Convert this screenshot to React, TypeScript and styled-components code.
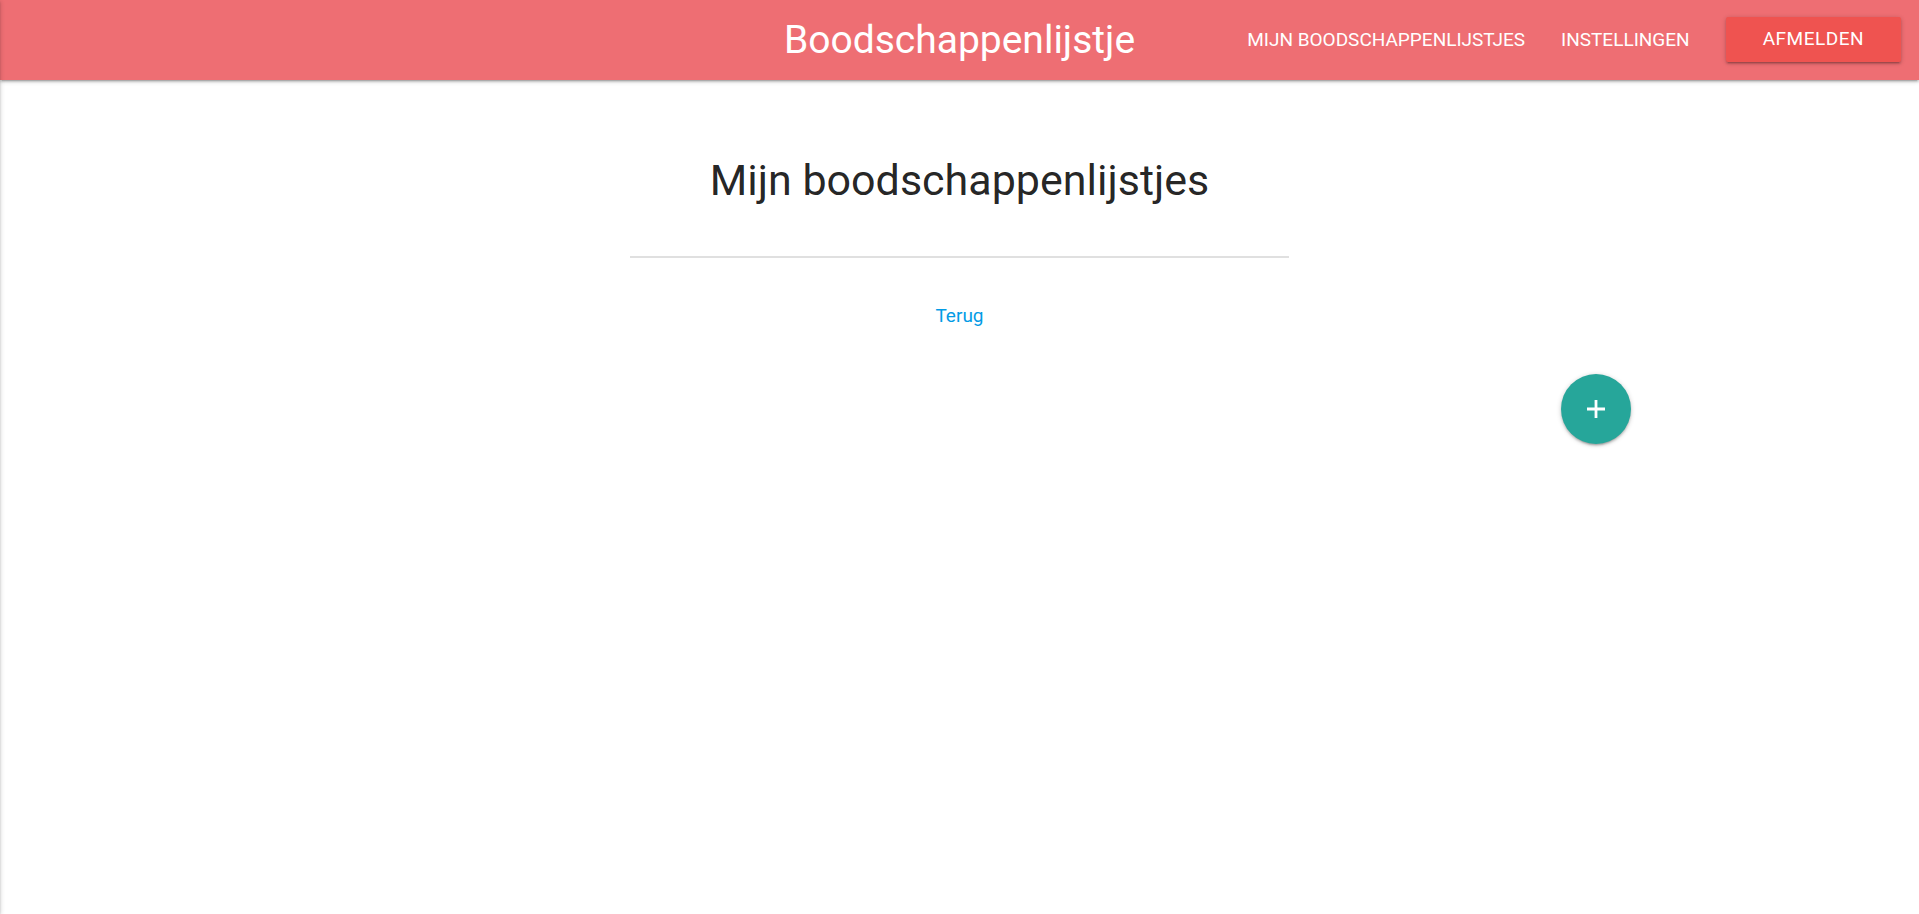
import React from "react";
import styled, { createGlobalStyle } from "styled-components";

const GlobalStyle = createGlobalStyle`
  *, *::before, *::after { box-sizing: border-box; }
  body {
    margin: 0;
    background: #fff;
    color: rgba(0, 0, 0, 0.87);
    font-family: Roboto, "Liberation Sans", sans-serif;
    font-size: 19px;
    line-height: 1.5;
  }
`;

const shadow =
  "0 2px 2px 0 rgba(0,0,0,.14), 0 3px 1px -2px rgba(0,0,0,.12), 0 1px 5px 0 rgba(0,0,0,.2)";

/* Closed side menu: it waits left of the window, only its shadow shows. */
const SideNav = styled.aside`
  position: fixed;
  top: 0;
  bottom: 0;
  right: 100%;
  z-index: 2;
  width: 300px;
  background: #fff;
  box-shadow: ${shadow};
`;

const Bar = styled.nav`
  display: grid;
  grid-template-columns: 1fr auto 1fr;
  height: 80px;
  background: #ee6e73;
  color: #fff;
  box-shadow: ${shadow};
`;

const Brand = styled.a`
  grid-column: 2;
  color: inherit;
  font-size: 39px;
  line-height: 80px;
  text-decoration: none;
`;

const NavList = styled.ul`
  display: flex;
  justify-content: flex-end;
  margin: 0;
  padding: 0;
  list-style: none;
`;

const NavLink = styled.a`
  display: block;
  padding: 0 18px;
  color: inherit;
  line-height: 80px;
  text-decoration: none;
  text-transform: uppercase;
  white-space: nowrap;
`;

const LogoutButton = styled.button`
  display: block;
  height: 45px;
  margin: 17px 18px 18px;
  padding: 0 37px;
  border: 0;
  border-radius: 2px;
  background: #ef5350;
  color: #fff;
  font: inherit;
  letter-spacing: 0.5px;
  text-transform: uppercase;
  box-shadow: ${shadow};
  cursor: pointer;
`;

const Content = styled.main`
  display: flex;
  flex-direction: column;
  width: 70%;
  margin: 0 auto;
  padding: 70px 0 24px;
`;

const Title = styled.h1`
  margin: 0 0 46px;
  font-size: 43px;
  font-weight: 400;
  line-height: 60px;
  text-align: center;
`;

const Divider = styled.hr`
  width: 49%;
  height: 2px;
  margin: 0 auto;
  border: 0;
  background: #e0e0e0;
`;

const BackLink = styled.a`
  align-self: center;
  margin: 43px 0;
  color: #039be5;
  line-height: 30px;
  text-decoration: none;
`;

const AddButton = styled.button`
  display: flex;
  align-items: center;
  justify-content: center;
  align-self: flex-end;
  width: 70px;
  height: 70px;
  padding: 0;
  border: 0;
  border-radius: 50%;
  background: #26a69a;
  color: #fff;
  box-shadow: ${shadow};
  cursor: pointer;
`;

export default function App() {
  return (
    <>
      <GlobalStyle />
      <SideNav />
      <Bar>
        <Brand href="#">Boodschappenlijstje</Brand>
        <NavList>
          <li><NavLink href="#">Mijn boodschappenlijstjes</NavLink></li>
          <li><NavLink href="#">Instellingen</NavLink></li>
          <li><LogoutButton type="button">Afmelden</LogoutButton></li>
        </NavList>
      </Bar>
      <Content>
        <Title>Mijn boodschappenlijstjes</Title>
        <Divider />
        <BackLink href="#">Terug</BackLink>
        <AddButton type="button" aria-label="Nieuw lijstje">
          <svg width="18" height="18" viewBox="0 0 18 18" stroke="currentColor" strokeWidth="2.8" aria-hidden="true">
            <path d="M9 0v18M0 9h18" />
          </svg>
        </AddButton>
      </Content>
    </>
  );
}
